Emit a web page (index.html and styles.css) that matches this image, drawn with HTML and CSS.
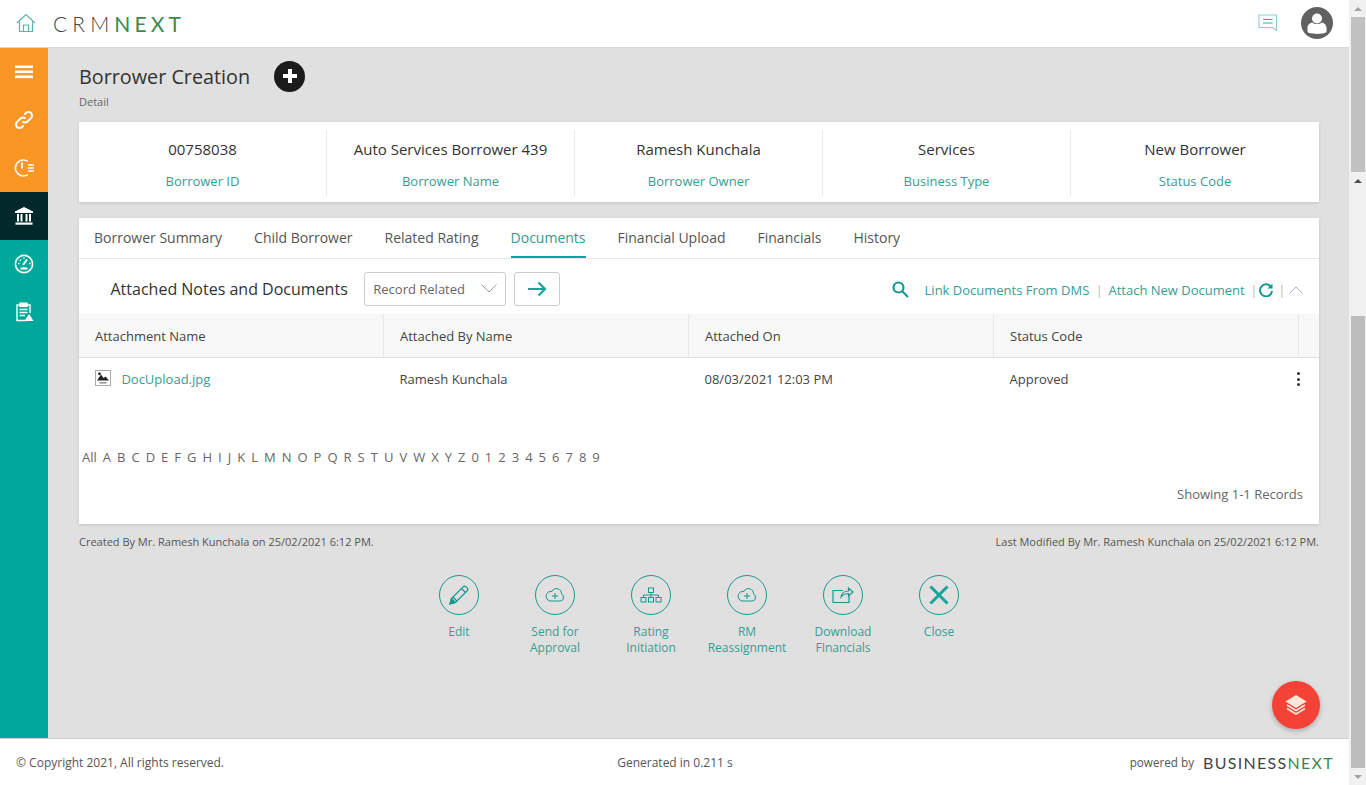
FILE: index.html

```html
<!DOCTYPE html>
<html lang="en">
<head>
  <meta charset="UTF-8" />
  <title>Borrower Creation</title>
  <link rel="stylesheet" href="styles.css">
</head>
<body>
  <div class="page">
    <header class="topbar">
      <svg class="home-icon" viewBox="0 0 20 20" width="20" height="20" fill="none" stroke="#5bb5ad" stroke-width="1.2">
        <path d="M1 10 L10 1.5 L19 10" />
        <path d="M3.5 8.5 V18.5 H16.5 V8.5" />
        <path d="M7.5 18.5 V12 H12.5 V18.5" />
      </svg>
      <div class="logo">CRM<span>NEXT</span></div>
      <svg class="chat-icon" viewBox="0 0 20 20" width="20" height="20" fill="none" stroke="#8fcfc9" stroke-width="1.1">
        <path d="M1 2 H18.5 V17.5 L14.5 14.5 H1 Z" />
        <path d="M5 6.5 H14.5 M5 10 H14.5" stroke="#35a99f" />
      </svg>
      <svg class="avatar" viewBox="0 0 32 32" width="32" height="32">
        <circle cx="16" cy="16" r="16" fill="#616161" />
        <circle cx="16" cy="11.5" r="5" fill="#fff" />
        <path d="M6.5 21 C6.5 17.5 9 16 11.5 15.5 C13 17.5 19 17.5 20.5 15.5 C23 16 25.5 17.5 25.5 21 V25 C23 27.5 9 27.5 6.5 25 Z" fill="#fff" />
      </svg>
    </header>

    <div class="middle">
      <nav class="sidebar">
        <div class="nav-group orange">
          <a class="nav-item">
            <svg viewBox="0 0 18 18" width="18" height="18" fill="#fff"><rect x="0" y="2.5" width="18" height="2.6" /><rect x="0" y="7.5" width="18" height="2.6" /><rect x="0" y="12.5" width="18" height="2.6" /></svg>
          </a>
          <a class="nav-item">
            <svg viewBox="0 0 20 20" width="20" height="20" fill="none" stroke="#fff" stroke-width="2"><path d="M8.5 11.5 a3.5 3.5 0 0 0 5 0 l3.5 -3.5 a3.5 3.5 0 0 0 -5 -5 l-1.5 1.5" /><path d="M11.5 8.5 a3.5 3.5 0 0 0 -5 0 l-3.5 3.5 a3.5 3.5 0 0 0 5 5 l1.5 -1.5" /></svg>
          </a>
          <a class="nav-item">
            <svg viewBox="0 0 22 20" width="22" height="20" fill="none" stroke="#fff" stroke-width="1.5"><path d="M15 3.5 A8 8 0 1 0 15 16.5" /><path d="M9 4.5 V10.5" stroke-width="1.8" /><path d="M15 7 H21 M15 10 H21 M15 13 H21" stroke-width="1.6" /></svg>
          </a>
        </div>
        <a class="nav-item active">
          <svg viewBox="0 0 20 20" width="20" height="20" fill="#fff"><path d="M10 1 L19 5.5 V7 H1 V5.5 Z" /><rect x="3" y="8" width="2" height="7.5" /><rect x="6.5" y="8" width="2" height="7.5" /><rect x="11.5" y="8" width="2" height="7.5" /><rect x="15" y="8" width="2" height="7.5" /><rect x="1.5" y="16.5" width="17" height="2.2" /></svg>
        </a>
        <a class="nav-item">
          <svg viewBox="0 0 20 20" width="20" height="20" fill="none" stroke="#fff" stroke-width="1.6"><circle cx="10" cy="10" r="8.6" /><path d="M9 11 L13 5.5" stroke-width="2" /><path d="M6.5 14.5 H13.5" stroke-width="2.2" /><path d="M4 9.5 H5.5 M5.8 5.8 L6.8 6.8 M10 3.5 V4.8 M15 9.5 H16.5" stroke-width="1.4" /></svg>
        </a>
        <a class="nav-item">
          <svg viewBox="0 0 20 20" width="20" height="20" fill="none" stroke="#fff" stroke-width="1.4"><path d="M6 3 H3 V18.5 H12 M13 3 H16 V11" /><rect x="6" y="1.2" width="7" height="3.2" fill="#fff" /><path d="M5.5 7.5 H13.5 M5.5 10.5 H13.5 M5.5 13.5 H11" /><path d="M15 12 L19.5 19 H10.5 Z" fill="#fff" stroke="none" /></svg>
        </a>
      </nav>

      <main class="content">
        <div class="title-row">
          <h1>Borrower Creation</h1>
          <span class="add-btn">
            <svg viewBox="0 0 14 14" width="14" height="14" fill="#fff"><path d="M5 0 H9 V5 H14 V9 H9 V14 H5 V9 H0 V5 H5 Z" /></svg>
          </span>
        </div>
        <p class="subtitle">Detail</p>

        <section class="summary card">
          <div class="summary-item"><div class="value">00758038</div><div class="label">Borrower ID</div></div>
          <div class="summary-item"><div class="value">Auto Services Borrower 439</div><div class="label">Borrower Name</div></div>
          <div class="summary-item"><div class="value">Ramesh Kunchala</div><div class="label">Borrower Owner</div></div>
          <div class="summary-item"><div class="value">Services</div><div class="label">Business Type</div></div>
          <div class="summary-item"><div class="value">New Borrower</div><div class="label">Status Code</div></div>
        </section>

        <section class="panel card">
          <div class="tabs">
            <a class="tab">Borrower Summary</a>
            <a class="tab">Child Borrower</a>
            <a class="tab">Related Rating</a>
            <a class="tab selected">Documents</a>
            <a class="tab">Financial Upload</a>
            <a class="tab">Financials</a>
            <a class="tab">History</a>
          </div>

          <div class="toolbar">
            <h2>Attached Notes and Documents</h2>
            <div class="select">
              Record Related
              <svg viewBox="0 0 16 9" width="16" height="9" fill="none" stroke="#9a9a9a" stroke-width="1"><path d="M0.5 0.5 L8 8 L15.5 0.5" /></svg>
            </div>
            <button class="go-btn">
              <svg viewBox="0 0 20 16" width="20" height="16" fill="none" stroke="#17a398" stroke-width="2.2"><path d="M1 8 H18 M11.5 1.5 L18 8 L11.5 14.5" /></svg>
            </button>
            <div class="toolbar-links">
              <svg class="search-icon" viewBox="0 0 17 17" width="17" height="17" fill="none" stroke="#17988e" stroke-width="2.2"><circle cx="6.5" cy="6.5" r="5" /><path d="M10.5 10.5 L16 16" /></svg>
              <a class="dms-link">Link Documents From DMS</a>
              <span class="sep">|</span>
              <a>Attach New Document</a>
              <span class="sep">|</span>
              <svg class="refresh-icon" viewBox="0 0 14 14" width="14" height="14" fill="none" stroke="#17988e" stroke-width="2"><path d="M12 4 A6 6 0 1 0 13 8" /><path d="M13.5 0.5 V5.5 H8.5 Z" fill="#17988e" stroke="none" /></svg>
              <span class="sep">|</span>
              <svg class="collapse-icon" viewBox="0 0 14 8" width="14" height="8" fill="none" stroke="#b5b5b5" stroke-width="1"><path d="M0.5 7.5 L7 1 L13.5 7.5" /></svg>
            </div>
          </div>

          <table class="docs">
            <thead>
              <tr><th>Attachment Name</th><th>Attached By Name</th><th>Attached On</th><th>Status Code</th><th></th></tr>
            </thead>
            <tbody>
              <tr>
                <td>
                  <svg class="file-icon" viewBox="0 0 16 16" width="16" height="16"><rect x="0.5" y="0.5" width="15" height="15" fill="#fff" stroke="#aaa" /><path d="M2 10.5 L6 4.5 L8.5 8 L10.5 6.5 L14 10.5 Z" fill="#222" /><circle cx="4.5" cy="3.8" r="1.4" fill="#222" /><rect x="4.5" y="12" width="7" height="1.6" fill="#999" /></svg>
                  <a class="file-link">DocUpload.jpg</a>
                </td>
                <td>Ramesh Kunchala</td>
                <td>08/03/2021 12:03 PM</td>
                <td>Approved</td>
                <td class="more"><span></span><span></span><span></span></td>
              </tr>
            </tbody>
          </table>

          <div class="alpha">
            <a>All</a><a>A</a><a>B</a><a>C</a><a>D</a><a>E</a><a>F</a><a>G</a><a>H</a><a>I</a><a>J</a><a>K</a><a>L</a><a>M</a><a>N</a><a>O</a><a>P</a><a>Q</a><a>R</a><a>S</a><a>T</a><a>U</a><a>V</a><a>W</a><a>X</a><a>Y</a><a>Z</a><a>0</a><a>1</a><a>2</a><a>3</a><a>4</a><a>5</a><a>6</a><a>7</a><a>8</a><a>9</a>
          </div>
          <div class="records">Showing 1-1 Records</div>
        </section>

        <div class="audit">
          <span>Created By Mr. Ramesh Kunchala on 25/02/2021 6:12 PM.</span>
          <span>Last Modified By Mr. Ramesh Kunchala on 25/02/2021 6:12 PM.</span>
        </div>

        <div class="actions">
          <a class="action">
            <span class="circle">
              <svg viewBox="0 0 22 22" width="22" height="22" fill="none" stroke="#17988e" stroke-width="1.2"><path d="M2 20 L3.5 14.5 L15.5 2.5 C17 1.2 20.8 5 19.5 6.5 L7.5 18.5 Z" /><path d="M5 13 L9 17 M13.5 4.5 L17.5 8.5" /><path d="M2 20 L3.5 14.5 L7.5 18.5 Z" fill="#17988e" /></svg>
            </span>
            Edit
          </a>
          <a class="action">
            <span class="circle">
              <svg viewBox="0 0 22 16" width="22" height="16" fill="none" stroke="#17988e" stroke-width="1"><path d="M6 14 H16.5 A3.7 3.7 0 0 0 17.5 7 A5 5 0 0 0 8 4.5 A4.7 4.7 0 0 0 6 14 Z" /><path d="M11 6 V12 M8 9 H14" /></svg>
            </span>
            Send for<br>Approval
          </a>
          <a class="action">
            <span class="circle">
              <svg viewBox="0 0 22 16" width="22" height="16" fill="none" stroke="#17988e" stroke-width="1"><rect x="8.5" y="1" width="5" height="4.5" /><rect x="1" y="10.5" width="5" height="4.5" /><rect x="8.5" y="10.5" width="5" height="4.5" /><rect x="16" y="10.5" width="5" height="4.5" /><path d="M11 5.5 V10.5 M3.5 10.5 V8 H18.5 V10.5" /></svg>
            </span>
            Rating<br>Initiation
          </a>
          <a class="action">
            <span class="circle">
              <svg viewBox="0 0 22 16" width="22" height="16" fill="none" stroke="#17988e" stroke-width="1"><path d="M6 14 H16.5 A3.7 3.7 0 0 0 17.5 7 A5 5 0 0 0 8 4.5 A4.7 4.7 0 0 0 6 14 Z" /><path d="M11 6 V12 M8 9 H14" /></svg>
            </span>
            RM<br>Reassignment
          </a>
          <a class="action">
            <span class="circle">
              <svg viewBox="0 0 22 18" width="22" height="18" fill="none" stroke="#17988e" stroke-width="1.2"><path d="M11 4.5 H1 V16.5 H17 V9" /><path d="M9 11 C9.5 7 12.5 5 16.5 5 V2 L21 6 L16.5 10 V7.5 C13 7.5 11 8.5 9 11 Z" /></svg>
            </span>
            Download<br>FInancials
          </a>
          <a class="action">
            <span class="circle">
              <svg viewBox="0 0 20 20" width="20" height="20" fill="none" stroke="#17a398" stroke-width="3"><path d="M1.5 1.5 L18.5 18.5 M18.5 1.5 L1.5 18.5" /></svg>
            </span>
            Close
          </a>
        </div>

        <a class="fab">
          <svg viewBox="0 0 22 22" width="22" height="22" fill="none" stroke="#ffe6dc" stroke-width="1.6"><path d="M11 2 L20 7.5 L11 13 L2 7.5 Z" fill="#ffe6dc" /><path d="M2 11 L11 16.5 L20 11" /><path d="M2 14.5 L11 20 L20 14.5" /></svg>
        </a>
      </main>
    </div>

    <footer class="footer">
      <span class="copyright">© Copyright 2021, All rights reserved.</span>
      <span class="generated">Generated in 0.211 s</span>
      <span class="powered">powered by <b>BUSINESS<i>NEXT</i></b></span>
    </footer>
  </div>

  <div class="scrollbar">
    <div class="arrow up light"></div>
    <div class="thumb first"></div>
    <div class="arrow up dark"></div>
    <div class="track"></div>
    <div class="thumb second"></div>
    <div class="arrow down"></div>
  </div>
</body>
</html>
```

FILE: styles.css

```css
* {
  box-sizing: border-box;
}
html, body {
  height: 785px;
  overflow: hidden;
}
body {
  margin: 0;
  display: flex;
  font-family: "Open Sans", Arial, sans-serif;
  font-size: 13px;
  color: #444;
  background: #f1f1f1;
}
svg {
  display: block;
  flex: none;
}
.page {
  width: 1349px;
  height: 785px;
  display: flex;
  flex-direction: column;
}

/* top bar */
.topbar {
  height: 48px;
  flex: none;
  background: #fff;
  border-bottom: 1px solid #d6d6d6;
  display: flex;
  align-items: center;
  padding: 0 16px;
}
.home-icon {
  margin-bottom: 1px;
}
.logo {
  margin-left: 17px;
  font-family: Lato, sans-serif;
  font-weight: 300;
  font-size: 21px;
  letter-spacing: 5.1px;
  color: #444;
  line-height: 1;
}
.logo span {
  color: #3c8a4c;
  font-weight: 400;
  letter-spacing: 4.1px;
}
.chat-icon {
  margin-left: auto;
  margin-bottom: 2px;
}
.avatar {
  margin-left: 23px;
  margin-bottom: 1px;
}

.middle {
  flex: 1;
  display: flex;
  min-height: 0;
}

/* side nav */
.sidebar {
  width: 48px;
  flex: none;
  background: #00a89b;
}
.nav-group.orange {
  background: #fa9624;
}
.nav-item {
  height: 48px;
  display: flex;
  align-items: center;
  justify-content: center;
}
.nav-item.active {
  background: #03282b;
}

/* main area */
.content {
  position: relative;
  flex: 1;
  background: #e0e0e0;
  padding: 0 30px 0 31px;
}
.title-row {
  display: flex;
  align-items: center;
  height: 28px;
  margin-top: 14px;
}
h1 {
  margin: 0;
  font-size: 19.8px;
  font-weight: 400;
  color: #333;
}
.add-btn {
  width: 31px;
  height: 31px;
  margin-left: 24px;
  border-radius: 50%;
  background: #1b1b1b;
  display: flex;
  align-items: center;
  justify-content: center;
}
.subtitle {
  margin: 4px 0 0;
  font-size: 11px;
  line-height: 15px;
  color: #666;
}
.card {
  background: #fff;
  box-shadow: 0 1px 3px rgba(0, 0, 0, 0.12);
}
.summary {
  margin-top: 13px;
  height: 80px;
  display: grid;
  grid-template-columns: repeat(5, 1fr);
  align-items: center;
  padding: 8px 0 6px;
}
.summary-item {
  height: 66px;
  text-align: center;
  border-right: 1px solid #e9e9e9;
  padding-top: 8px;
}
.summary-item:last-child {
  border-right: 0;
}
.value {
  font-size: 15px;
  line-height: 22px;
  color: #333;
}
.label {
  margin-top: 12px;
  font-size: 13px;
  line-height: 18px;
  color: #3a9c94;
}

.panel {
  margin-top: 16px;
  height: 306px;
}
.tabs {
  height: 41px;
  display: flex;
  gap: 32px;
  padding-left: 15px;
  border-bottom: 1px solid #e6e6e6;
}
.tab {
  height: 40px;
  line-height: 40px;
  font-size: 14px;
  color: #555;
}
.tab.selected {
  color: #2f9a91;
  border-bottom: 2px solid #00a89b;
}

.toolbar {
  height: 55px;
  display: flex;
  align-items: center;
  padding: 4px 16px 0 31.5px;
}
h2 {
  margin: 0;
  font-size: 16px;
  font-weight: 400;
  color: #333;
}
.select {
  width: 142px;
  height: 34px;
  margin-left: 16.5px;
  padding: 0 8px;
  border: 1px solid #ccc;
  border-radius: 3px;
  display: flex;
  align-items: center;
  justify-content: space-between;
  font-size: 13px;
  color: #666;
}
.go-btn {
  width: 46px;
  height: 34px;
  margin-left: 8px;
  background: #fff;
  border: 1px solid #ccc;
  border-radius: 3px;
  display: flex;
  align-items: center;
  justify-content: center;
  padding: 0;
}
.toolbar-links {
  margin-left: auto;
  margin-top: 2px;
  display: flex;
  align-items: center;
  gap: 5.5px;
  font-size: 13px;
  color: #3a9c94;
}
.search-icon {
  margin-right: 10px;
}
.dms-link {
  margin-right: 1px;
}
.refresh-icon {
  margin-left: -4px;
}
.collapse-icon {
  margin-left: -2px;
}
.sep {
  color: #bbb;
}

table.docs {
  width: 100%;
  border-collapse: collapse;
  table-layout: fixed;
}
.docs th {
  height: 43px;
  padding: 2px 0 0 16.5px;
  background: #f8f8f8;
  border-right: 1px solid #e8e8e8;
  border-bottom: 1px solid #e0e0e0;
  font-size: 13px;
  font-weight: 400;
  color: #444;
  text-align: left;
  width: 305px;
}
.docs th:first-child {
  width: 304px;
  padding-left: 16px;
}
.docs th:last-child {
  width: auto;
  border-right: 0;
}
.docs td {
  height: 43px;
  padding: 0 0 0 16.5px;
  font-size: 13px;
  color: #444;
}
.docs td:first-child {
  padding-left: 16px;
}
.file-icon {
  display: inline-block;
  vertical-align: -2px;
  margin-right: 7px;
}
.file-link {
  color: #3a9c94;
}
.docs td.more {
  padding: 0 0 2px;
}
.more span {
  display: block;
  width: 3px;
  height: 3px;
  margin: 2.5px 0 0 -1.5px;
  border-radius: 50%;
  background: #333;
}

.alpha {
  margin-top: 48px;
  padding-left: 3px;
  display: flex;
  gap: 6px;
  font-size: 13px;
  line-height: 18px;
  color: #666;
}
.records {
  margin-top: 19px;
  padding-right: 16px;
  text-align: right;
  font-size: 13px;
  line-height: 18px;
  color: #666;
}

.audit {
  margin-top: 10px;
  display: flex;
  justify-content: space-between;
  font-size: 11px;
  line-height: 16px;
  color: #555;
}

.actions {
  margin-top: 25px;
  display: flex;
  justify-content: center;
}
.action {
  width: 96px;
  display: flex;
  flex-direction: column;
  align-items: center;
  text-align: center;
  font-size: 12px;
  line-height: 16px;
  color: #3a9c94;
}
.circle {
  width: 40px;
  height: 40px;
  margin-bottom: 9px;
  border: 1px solid #17988e;
  border-radius: 50%;
  display: flex;
  align-items: center;
  justify-content: center;
}

.fab {
  position: absolute;
  right: 29px;
  bottom: 9px;
  width: 48px;
  height: 48px;
  border-radius: 50%;
  background: #f44336;
  box-shadow: 0 2px 5px rgba(0, 0, 0, 0.25);
  display: flex;
  align-items: center;
  justify-content: center;
}

/* footer */
.footer {
  height: 47px;
  flex: none;
  background: #fff;
  border-top: 1px solid #d0d0d0;
  display: grid;
  grid-template-columns: 1fr 1fr 1fr;
  align-items: center;
  padding: 0 15px 0 16px;
  font-size: 12px;
  color: #555;
}
.generated {
  text-align: center;
  margin-top: 1px;
}
.powered {
  display: flex;
  align-items: center;
  justify-content: flex-end;
  gap: 9px;
  font-size: 11.7px;
}
.powered b {
  font-family: Lato, sans-serif;
  font-weight: 400;
  font-size: 16px;
  letter-spacing: 1.3px;
  color: #444;
}
.powered i {
  font-style: normal;
  color: #3c8a4c;
}

/* the two stacked scrollbars */
.scrollbar {
  width: 17px;
  height: 785px;
  flex: none;
  background: #f1f1f1;
  display: flex;
  flex-direction: column;
  align-items: center;
}
.thumb {
  width: 14px;
  margin-left: 1px;
  background: #c1c1c1;
}
.thumb.first {
  height: 155px;
}
.thumb.second {
  height: 452px;
  background: #bcbcbc;
}
.arrow {
  height: 17px;
  flex: none;
  display: flex;
  align-items: center;
  justify-content: center;
}
.arrow::before {
  content: "";
  border-left: 4px solid transparent;
  border-right: 4px solid transparent;
}
.arrow.up::before {
  border-bottom: 4px solid #a3a3a3;
}
.arrow.up.dark::before {
  border-bottom-color: #505050;
}
.arrow.down::before {
  border-top: 4px solid #a3a3a3;
}
.track {
  height: 127px;
}
```
